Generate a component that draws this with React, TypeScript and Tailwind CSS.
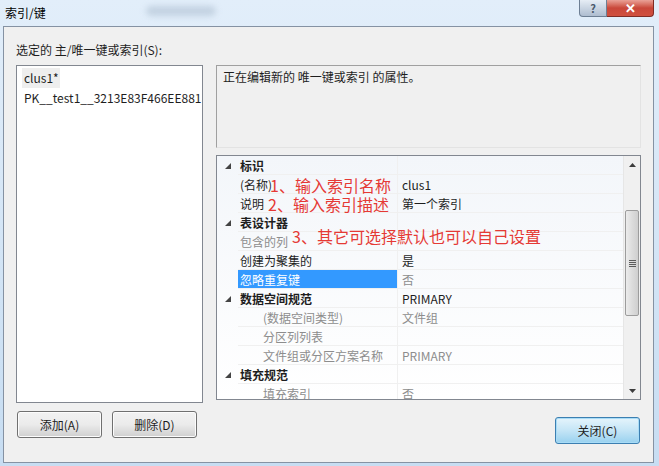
import React from "react";

const font = { fontFamily: '"Noto Sans CJK SC", "Noto Sans", sans-serif' };

type Row = {
  name: string;
  value?: string;
  cat?: boolean;
  sub?: boolean;
  dim?: boolean;
  dimValue?: boolean;
  selected?: boolean;
};

const rows: Row[] = [
  { name: "标识", cat: true },
  { name: "(名称)", value: "clus1" },
  { name: "说明", value: "第一个索引" },
  { name: "表设计器", cat: true },
  { name: "包含的列", dim: true },
  { name: "创建为聚集的", value: "是" },
  { name: "忽略重复键", value: "否", selected: true, dimValue: true },
  { name: "数据空间规范", value: "PRIMARY", cat: true },
  { name: "(数据空间类型)", value: "文件组", sub: true, dim: true, dimValue: true },
  { name: "分区列列表", sub: true, dim: true },
  { name: "文件组或分区方案名称", value: "PRIMARY", sub: true, dim: true, dimValue: true },
  { name: "填充规范", cat: true },
  { name: "填充索引", value: "否", sub: true, dim: true, dimValue: true },
];

function GridRow({ r }: { r: Row }) {
  return (
    <div className="flex h-[19px] shrink-0 text-[12px] leading-[19px]">
      <div className="w-[21px] shrink-0 flex items-center justify-center">
        {r.cat && (
          <svg width="6" height="6" viewBox="0 0 6 6">
            <path d="M6 0 L6 6 L0 6 Z" fill="#444" />
          </svg>
        )}
      </div>
      <div
        className={
          "w-[160px] shrink-0 border-b border-r border-[#f0f0f0] whitespace-nowrap overflow-hidden " +
          (r.sub ? "pl-[25px] " : "pl-[2px] ") +
          (r.selected
            ? "bg-[#3399ff] text-white"
            : r.dim
            ? "text-[#8d8d8d]"
            : "text-[#1e1e1e]") +
          (r.cat ? " font-bold text-[#1e1e1e]" : "")
        }
      >
        {r.name}
      </div>
      <div
        className={
          "flex-1 border-b border-[#f0f0f0] pl-[4px] whitespace-nowrap overflow-hidden " +
          (r.dimValue ? "text-[#8d8d8d]" : "text-[#1e1e1e]")
        }
      >
        {r.value}
      </div>
    </div>
  );
}

function Scrollbar() {
  return (
    <div className="w-[17px] shrink-0 bg-[#f0f0f0] border-l border-[#e6e6e6] flex flex-col">
      <div className="h-[17px] flex items-center justify-center">
        <svg width="7" height="4" viewBox="0 0 7 4">
          <path d="M3.5 0 L7 4 L0 4 Z" fill="#3c3c3c" />
        </svg>
      </div>
      <div className="h-[37px]" />
      <div className="h-[106px] mx-[1px] rounded-[2px] border border-[#9c9c9c] bg-gradient-to-r from-[#ececec] via-[#dcdcdc] to-[#cfcfcf] flex flex-col items-center justify-center gap-[1px]">
        <div className="w-[7px] h-px bg-[#5c5c5c]" />
        <div className="w-[7px] h-px bg-[#5c5c5c]" />
        <div className="w-[7px] h-px bg-[#5c5c5c]" />
        <div className="w-[7px] h-px bg-[#5c5c5c]" />
      </div>
      <div className="flex-1" />
      <div className="h-[17px] flex items-center justify-center">
        <svg width="7" height="4" viewBox="0 0 7 4">
          <path d="M0 0 L7 0 L3.5 4 Z" fill="#3c3c3c" />
        </svg>
      </div>
    </div>
  );
}

function Btn({ children, primary }: { children: React.ReactNode; primary?: boolean }) {
  return (
    <button
      className={
        "w-[85px] h-[27px] rounded-[3px] border text-[12px] text-[#1e1e1e] " +
        (primary
          ? "border-[#3c7fb1] bg-gradient-to-b from-[#e5f4fc] via-[#c4e5f6] to-[#98d1ef] shadow-[inset_0_0_0_1px_#a8dcf7]"
          : "border-[#707070] bg-gradient-to-b from-[#f2f2f2] via-[#ebebeb] to-[#cfcfcf] shadow-[inset_0_0_0_1px_#fcfcfc]")
      }
    >
      {children}
    </button>
  );
}

export default function App() {
  return (
    <div
      className="w-[659px] h-[466px] bg-gradient-to-b from-[#e2eefa] to-[#c7ddf2] flex flex-col overflow-hidden"
      style={font}
    >
      {/* title bar */}
      <div className="h-[26px] shrink-0 flex items-start relative">
        <div className="pl-[5px] pt-[4px] text-[12px] text-black">索引/键</div>
        <div className="ml-[100px] mt-[6px] w-[70px] h-[10px] rounded-full bg-[#aebfd1] blur-[3px] opacity-60" />
        <div className="absolute right-[5px] top-0 flex">
          <div className="w-[28px] h-[17px] rounded-bl-[4px] border border-t-0 border-[#6d7f94] bg-gradient-to-b from-[#e6edf5] to-[#aebdd0] flex items-center justify-center text-[11px] font-bold text-[#49596c]">
            ?
          </div>
          <div className="w-[47px] h-[17px] rounded-br-[4px] border border-t-0 border-l-0 border-[#7f2c25] bg-gradient-to-b from-[#e9a197] via-[#c9473a] to-[#d0503f] flex items-center justify-center text-[13px] font-bold text-white">
            ✕
          </div>
        </div>
      </div>

      {/* content */}
      <div className="ml-[3px] mr-[5px] mb-[3px] flex-1 border border-[#8592a3] bg-[#f0f0f0] flex flex-col px-[12px]">
        <div className="pt-[15px] h-[38px] text-[12px] text-[#1e1e1e] leading-[16px]">
          选定的 主/唯一键或索引(S):
        </div>
        <div className="flex">
          {/* left */}
          <div className="w-[187px] shrink-0 flex flex-col">
            <div className="h-[338px] border border-[#828790] bg-white px-[5px] pt-[2px] text-[12px] text-[#1e1e1e]">
              <div className="h-[20px] leading-[20px] w-[38px] pl-[2px] bg-[#eeeeee]">clus1*</div>
              <div className="h-[20px] leading-[20px] pl-[2px] whitespace-nowrap">PK__test1__3213E83F466EE881</div>
            </div>
            <div className="flex gap-[10px] mt-[8px] pl-[1px]">
              <Btn>添加(A)</Btn>
              <Btn>删除(D)</Btn>
            </div>
          </div>

          {/* right */}
          <div className="ml-[13px] w-[426px] flex flex-col">
            <div className="h-[83px] border-t border-l border-[#a0a0a0] border-r border-r-[#e3e3e3] border-b border-b-[#e3e3e3] pl-[6px] pt-[3px] text-[12px] text-[#1e1e1e] leading-[16px]">
              正在编辑新的 唯一键或索引 的属性。
            </div>
            <div className="mt-[7px] h-[245px] border border-[#828790] bg-white flex relative overflow-hidden">
              <div className="flex-1 flex flex-col bg-gradient-to-b from-[#f3f6fa] to-white">
                {rows.map((r, i) => (
                  <GridRow key={i} r={r} />
                ))}
              </div>
              <Scrollbar />
              <div className="absolute left-[53px] top-[19px] text-[16px] leading-[20px] text-[#e53935] whitespace-nowrap">
                1、输入索引名称
              </div>
              <div className="absolute left-[51px] top-[38px] text-[16px] leading-[20px] text-[#e53935] whitespace-nowrap">
                2、输入索引描述
              </div>
              <div className="absolute left-[75px] top-[70px] text-[16px] leading-[20px] text-[#e53935] whitespace-nowrap">
                3、其它可选择默认也可以自己设置
              </div>
            </div>
            <div className="flex justify-end mt-[17px] pr-[1px]">
              <Btn primary>关闭(C)</Btn>
            </div>
          </div>
        </div>
      </div>
    </div>
  );
}
